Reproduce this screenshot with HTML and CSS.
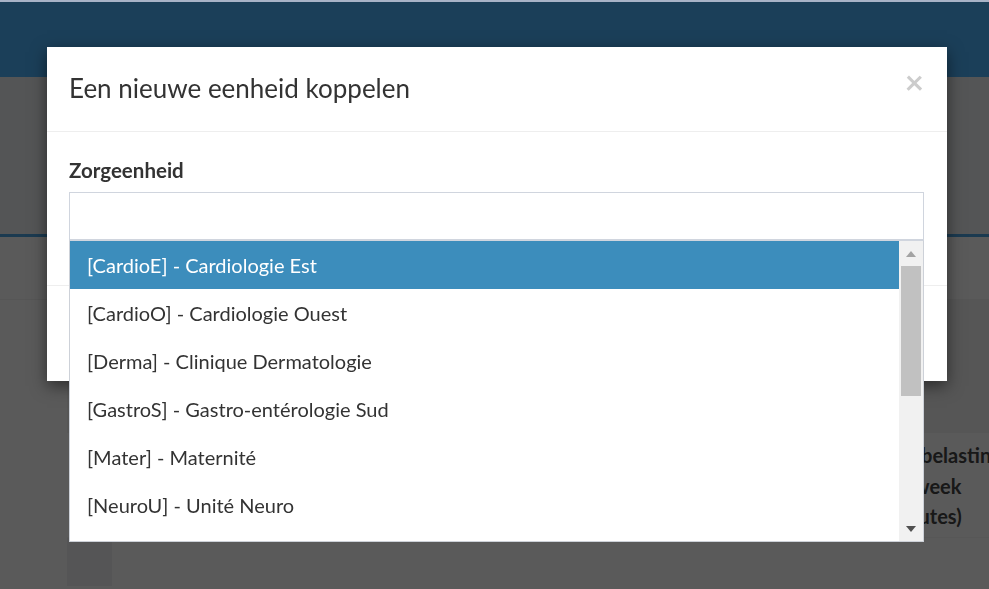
FILE: index.html
```html
<!DOCTYPE html>
<html lang="nl">
<head>
    <meta charset="UTF-8">
    <meta name="viewport" content="width=device-width, initial-scale=1.0">
    <title>Zorgeenheden</title>
    <link rel="stylesheet" href="styles.css">
</head>
<body>
    <div class="topline"></div>
    <nav class="navbar"></nav>

    <div class="page">
        <section class="page-head"></section>
        <main class="content">
            <div class="toolbar"></div>
            <div class="panel">
                <div class="panel-top"></div>
                <div class="table-head">
                    <div class="th-spacer"></div>
                    <div class="th">Zorgbelasting<br>per week<br>(minutes)</div>
                </div>
                <div class="table-row">
                    <div class="row-gutter"></div>
                    <div class="row-card"></div>
                </div>
            </div>
        </main>
    </div>

    <div class="backdrop"></div>

    <div class="modal">
        <div class="modal-dialog">
            <div class="modal-header">
                <h4 class="modal-title">Een nieuwe eenheid koppelen</h4>
                <span class="close">&times;</span>
            </div>
            <div class="modal-body">
                <div class="form-group">
                    <label class="form-label" for="unit">Zorgeenheid</label>
                    <div class="select">
                        <input type="text" id="unit" class="select-input">
                        <div class="dropdown">
                            <ul class="options">
                                <li class="option active">[CardioE] - Cardiologie Est</li>
                                <li class="option">[CardioO] - Cardiologie Ouest</li>
                                <li class="option">[Derma] - Clinique Dermatologie</li>
                                <li class="option">[GastroS] - Gastro-entérologie Sud</li>
                                <li class="option">[Mater] - Maternité</li>
                                <li class="option">[NeuroU] - Unité Neuro</li>
                            </ul>
                            <div class="scrollbar">
                                <div class="scroll-btn up"><span class="arrow-up"></span></div>
                                <div class="scroll-track"><div class="scroll-thumb"></div></div>
                                <div class="scroll-btn down"><span class="arrow-down"></span></div>
                            </div>
                        </div>
                    </div>
                </div>
            </div>
            <div class="modal-footer"></div>
        </div>
    </div>
</body>
</html>
```

FILE: styles.css
```css
* {
    box-sizing: border-box;
}
body {
    font-family: Lato, "Liberation Sans", sans-serif;
    font-size: 20px;
    color: #333;
    margin: 0;
    padding: 0;
    background-color: #fff;
    overflow: hidden;
}
.topline {
    height: 2px;
    background-color: #a8b3c7;
    position: relative;
    z-index: 20;
}
.navbar {
    height: 75px;
    background-color: #1b3f59;
    position: relative;
    z-index: 20;
}
.page-head {
    height: 160px;
    background-color: #eef0f2;
    border-bottom: 3px solid #4ca4e3;
}
.content {
    background-color: #fff;
}
.toolbar {
    height: 63px;
    border-bottom: 1px solid #f2f2f2;
}
.panel {
    margin-left: 67px;
}
.panel-top {
    height: 133px;
    background-color: #f2f2f2;
}
.table-head {
    display: flex;
    background-color: #fff;
    border-bottom: 1px solid #f6f6f6;
}
.th-spacer {
    flex: 1;
}
.th {
    width: 109px;
    padding: 7px 0 5px;
    font-weight: bold;
    line-height: 30.5px;
    white-space: nowrap;
    color: #444;
}
.table-row {
    display: flex;
    height: 48px;
}
.row-gutter {
    width: 45px;
    background-color: #f0f1f2;
}
.row-card {
    flex: 1;
    height: 46px;
    border-radius: 0 0 0 8px;
    background-color: #fff;
}
.backdrop {
    position: fixed;
    inset: 0;
    background-color: rgba(0, 0, 0, 0.647);
    z-index: 10;
}
.modal {
    position: fixed;
    inset: 0;
    z-index: 30;
}
.modal-dialog {
    width: 900px;
    margin: 47px 0 0 47px;
    background-color: #fff;
    box-shadow: 0 5px 15px rgba(0, 0, 0, 0.5);
}
.modal-header {
    display: flex;
    justify-content: space-between;
    align-items: flex-start;
    padding: 22px 23px 23px 22px;
    border-bottom: 1px solid #eee;
}
.modal-title {
    margin: 0;
    font-size: 26px;
    font-weight: normal;
    line-height: 39px;
}
.close {
    font-size: 33px;
    font-weight: bold;
    line-height: 1;
    color: #ccc;
    margin-top: -4px;
}
.modal-body {
    padding: 23px 23px 23px 22px;
}
.form-group {
    margin-bottom: 22px;
}
.form-label {
    display: block;
    font-weight: bold;
    font-size: 20.5px;
    line-height: 30px;
    margin-bottom: 7px;
}
.select {
    position: relative;
}
.select-input {
    display: block;
    width: 100%;
    height: 48px;
    border: 1px solid #d0d5de;
    font: inherit;
}
.dropdown {
    position: absolute;
    top: 100%;
    left: 0;
    right: 0;
    height: 302px;
    display: flex;
    background-color: #fff;
    border: 1px solid #cdd1d8;
    border-top-color: #d0d5de;
    z-index: 5;
}
.options {
    flex: 1;
    list-style: none;
    margin: 0;
    padding: 0;
    overflow: hidden;
}
.option {
    height: 48px;
    line-height: 48px;
    padding-left: 17px;
    white-space: nowrap;
}
.option.active {
    background-color: #3c8dbc;
    color: #fff;
}
.scrollbar {
    width: 24px;
    display: flex;
    flex-direction: column;
    background-color: #f1f1f1;
}
.scroll-btn {
    height: 25px;
    display: flex;
    align-items: center;
    justify-content: center;
}
.scroll-track {
    flex: 1;
    padding: 0 2px;
}
.scroll-thumb {
    height: 130px;
    background-color: #c1c1c1;
}
.arrow-up {
    border-left: 5.5px solid transparent;
    border-right: 5.5px solid transparent;
    border-bottom: 6px solid #a3a3a3;
}
.arrow-down {
    border-left: 5.5px solid transparent;
    border-right: 5.5px solid transparent;
    border-top: 6px solid #505050;
}
.modal-footer {
    height: 96px;
    border-top: 1px solid #eee;
}
```
